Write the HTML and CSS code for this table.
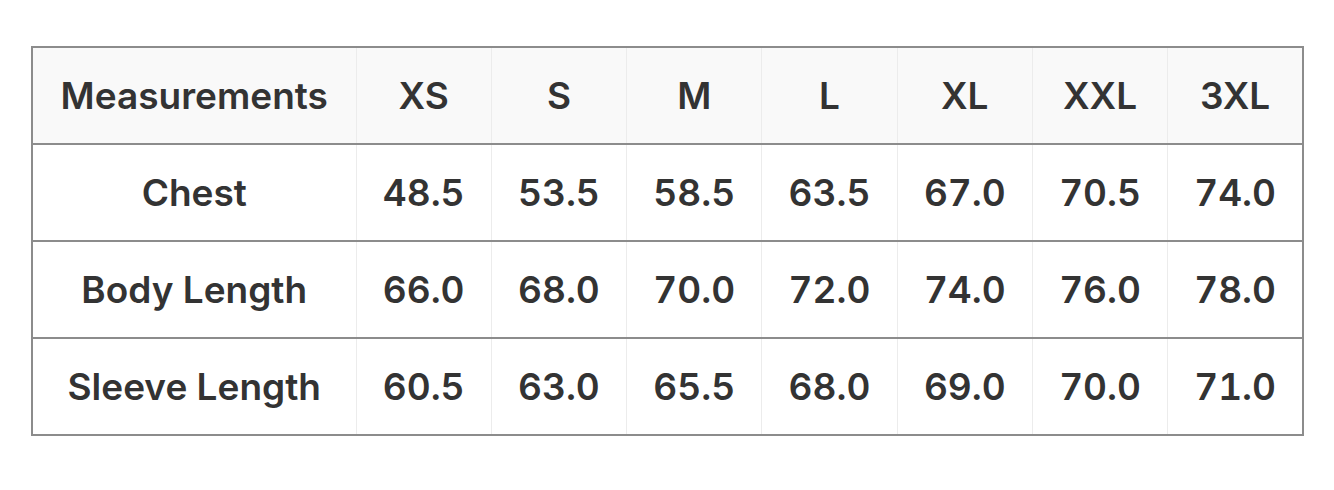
FILE: index.html
```html
<!DOCTYPE html>
<html lang="en">
<head>
<meta charset="utf-8">
<title>Size chart</title>
<link rel="stylesheet" href="styles.css">
</head>
<body>
<div class="wrap">
<table class="size-table">
<colgroup>
<col class="col-label">
<col><col><col><col><col><col><col>
</colgroup>
<thead>
<tr class="head-row">
<th>Measurements</th><th>XS</th><th>S</th><th>M</th><th>L</th><th>XL</th><th>XXL</th><th>3XL</th>
</tr>
</thead>
<tbody>
<tr><td class="label">Chest</td><td>48.5</td><td>53.5</td><td>58.5</td><td>63.5</td><td>67.0</td><td>70.5</td><td>74.0</td></tr>
<tr><td class="label">Body Length</td><td>66.0</td><td>68.0</td><td>70.0</td><td>72.0</td><td>74.0</td><td>76.0</td><td>78.0</td></tr>
<tr><td class="label">Sleeve Length</td><td>60.5</td><td>63.0</td><td>65.5</td><td>68.0</td><td>69.0</td><td>70.0</td><td>71.0</td></tr>
</tbody>
</table>
</div>
</body>
</html>
```

FILE: styles.css
```css
html, body {
  margin: 0;
  padding: 0;
  background: #ffffff;
}

.wrap {
  padding: 46px 0 0 31px;
}

.size-table {
  width: 1273px;
  border-collapse: collapse;
  table-layout: fixed;
  border: 2px solid #8c8c8c;
  font-family: Inter, "Liberation Sans", sans-serif;
  font-weight: 600;
  font-size: 37px;
  color: #333333;
}

.col-label {
  width: 324px;
}

.size-table th,
.size-table td {
  height: 95px;
  padding: 0;
  text-align: center;
  vertical-align: middle;
  font-weight: 600;
  border-left: 1px solid #ececec;
}

.size-table td {
  font-variant-numeric: tabular-nums;
}

.size-table td.label {
  font-variant-numeric: normal;
}

.size-table tr {
  border-bottom: 2px solid #8c8c8c;
}

.head-row th {
  background: #f9f9f9;
}
```
